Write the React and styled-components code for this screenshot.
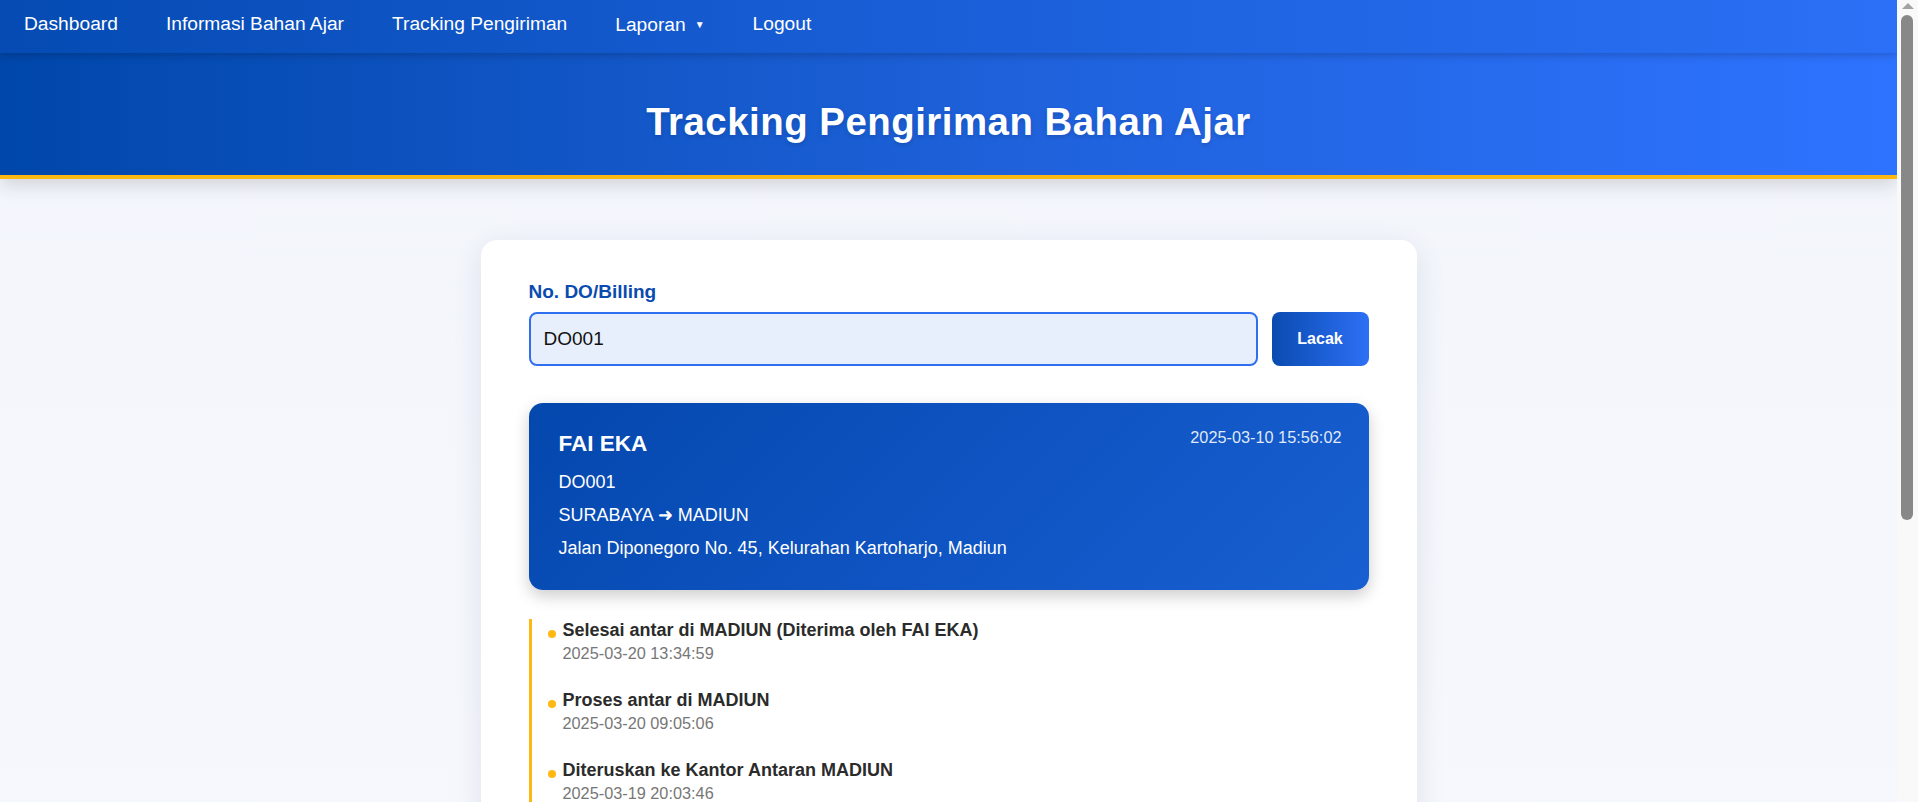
import React from 'react'
import styled, { createGlobalStyle } from 'styled-components';

const GlobalStyle = createGlobalStyle`
    * {
        box-sizing: border-box;
    }
    html::-webkit-scrollbar {
        display: none;
    }
    body {
        margin: 0;
        font-family: "Liberation Sans", Arial, sans-serif;
        background: linear-gradient(180deg, #f2f5fb 0%, #f8fafd 100%);
        min-height: 100vh;
    }
`;

// leaves room for the classic scrollbar drawn at the right edge
const Page = styled.div`
    padding-right: 21px;
`;

const ScrollTrack = styled.div`
    position: fixed;
    top: 0;
    right: 0;
    width: 21px;
    height: 100vh;
    background: #f9f9f9;
    z-index: 10;
`;

const ScrollArrow = styled.div`
    margin: 3px 0 0 2px;
    width: 0;
    height: 0;
    border-left: 6px solid transparent;
    border-right: 6px solid transparent;
    border-bottom: 6px solid #a3a3a3;
    transform: translateX(3px);
`;

const ScrollThumb = styled.div`
    margin: 6px 0 0 4px;
    width: 12px;
    height: 505px;
    border-radius: 6px;
    background: #888888;
`;

const Nav = styled.nav`
    height: 53px;
    display: flex;
    align-items: flex-start;
    padding-top: 13px;
    background: linear-gradient(90deg, #054bb3 0%, #1a5fd8 50%, #2b70f6 100%);
    box-shadow: 0 2px 8px rgba(0, 0, 0, 0.22);
    position: relative;
    z-index: 2;
`;

const NavLink = styled.a`
    color: #ffffff;
    font-size: 19.2px;
    line-height: 22px;
    padding: 0 24px;
    text-decoration: none;
    display: flex;
    align-items: center;
`;

const Caret = styled.span`
    font-size: 10px;
    margin-left: 9px;
    margin-top: 1px;
`;

const Header = styled.header`
    height: 126px;
    padding-top: 16px;
    display: flex;
    align-items: center;
    justify-content: center;
    background: linear-gradient(90deg, #0047ab 0%, #1f62dc 55%, #2e73ff 100%);
    border-bottom: 4px solid #fdb813;
    box-shadow: 0 6px 18px rgba(0, 0, 0, 0.14);
    position: relative;
    z-index: 1;
`;

const Title = styled.h1`
    margin: 0;
    color: #ffffff;
    font-size: 38.4px;
    font-weight: 700;
    letter-spacing: 0.5px;
    text-shadow: 0 2px 4px rgba(0, 0, 0, 0.15);
`;

const Container = styled.main`
    max-width: 960px;
    margin: 0 auto;
    padding: 61px 12px 60px;
`;

const Card = styled.section`
    background: #ffffff;
    border-radius: 16px;
    padding: 41px 48px 48px;
    box-shadow: 0 8px 30px rgba(20, 40, 90, 0.1);
`;

const Label = styled.label`
    display: block;
    color: #0a4bb0;
    font-size: 19px;
    font-weight: 700;
    line-height: 22px;
    margin-bottom: 9px;
`;

const SearchRow = styled.div`
    display: flex;
    gap: 14px;
`;

const Input = styled.input`
    flex: 1;
    height: 54px;
    border: 2px solid #2f6ff0;
    border-radius: 8px;
    background: #e8effc;
    padding: 0 13px;
    font-family: "Liberation Sans", Arial, sans-serif;
    font-size: 19px;
    color: #111111;
    outline: none;
`;

const Button = styled.button`
    width: 97px;
    height: 54px;
    border: none;
    border-radius: 8px;
    background: linear-gradient(90deg, #0a4bb0 0%, #2d70f5 100%);
    color: #ffffff;
    font-family: "Liberation Sans", Arial, sans-serif;
    font-size: 16px;
    font-weight: 700;
    cursor: pointer;
`;

const Result = styled.div`
    margin-top: 37px;
    border-radius: 14px;
    padding: 24px 27px 29px 30px;
    background: linear-gradient(135deg, #0447ad 0%, #0d52bf 45%, #185fd1 100%);
    color: #ffffff;
    box-shadow: 0 6px 16px rgba(0, 0, 0, 0.2);
`;

const ResultHead = styled.div`
    display: flex;
    justify-content: space-between;
    align-items: flex-start;
    margin-bottom: 12px;
`;

const Name = styled.h2`
    margin: 4px 0 0;
    font-size: 22.5px;
    line-height: 26px;
    font-weight: 700;
`;

const Stamp = styled.span`
    font-size: 16.3px;
    line-height: 20px;
    color: rgba(255, 255, 255, 0.88);
`;

const Line = styled.p`
    margin: 0 0 7px;
    font-size: 18px;
    line-height: 26px;
    &:last-child {
        margin-bottom: 0;
    }
`;

const Timeline = styled.ul`
    list-style: none;
    margin: 29px 0 0;
    padding: 0 0 0 16px;
    border-left: 3px solid #fdb813;
`;

const Item = styled.li`
    display: grid;
    grid-template-columns: 8px 1fr;
    column-gap: 7px;
    margin-bottom: 25px;
`;

const Dot = styled.span`
    width: 8px;
    height: 8px;
    border-radius: 50%;
    background: #fdb813;
    margin-top: 11px;
`;

const Status = styled.div`
    color: #2b2b2b;
    font-size: 18px;
    font-weight: 700;
    line-height: 22px;
`;

const When = styled.div`
    color: #777777;
    font-size: 16.3px;
    line-height: 22px;
    margin-top: 1px;
`;

const history = [
  { status: 'Selesai antar di MADIUN (Diterima oleh FAI EKA)', time: '2025-03-20 13:34:59' },
  { status: 'Proses antar di MADIUN', time: '2025-03-20 09:05:06' },
  { status: 'Diteruskan ke Kantor Antaran MADIUN', time: '2025-03-19 20:03:46' },
  { status: 'Tiba di Hub MADIUN', time: '2025-03-19 15:21:10' },
  { status: 'Diteruskan ke Hub MADIUN', time: '2025-03-18 22:47:33' },
  { status: 'Tiba di Hub SURABAYA', time: '2025-03-18 10:12:05' },
  { status: 'Proses sortir di SURABAYA', time: '2025-03-17 19:40:28' },
  { status: 'Diterima di Kantor SURABAYA', time: '2025-03-17 08:15:44' },
  { status: 'Penjemputan bahan ajar di SURABAYA', time: '2025-03-11 10:02:17' },
  { status: 'Pesanan dibuat', time: '2025-03-10 15:56:02' },
];

const App = () => {
  return (
    <Page>
      <GlobalStyle />
      <ScrollTrack>
        <ScrollArrow />
        <ScrollThumb />
      </ScrollTrack>
      <Nav>
        <NavLink href="#">Dashboard</NavLink>
        <NavLink href="#">Informasi Bahan Ajar</NavLink>
        <NavLink href="#">Tracking Pengiriman</NavLink>
        <NavLink href="#">Laporan<Caret>▼</Caret></NavLink>
        <NavLink href="#">Logout</NavLink>
      </Nav>
      <Header>
        <Title>Tracking Pengiriman Bahan Ajar</Title>
      </Header>
      <Container>
        <Card>
          <Label htmlFor="do">No. DO/Billing</Label>
          <SearchRow>
            <Input id="do" defaultValue="DO001" />
            <Button>Lacak</Button>
          </SearchRow>
          <Result>
            <ResultHead>
              <Name>FAI EKA</Name>
              <Stamp>2025-03-10 15:56:02</Stamp>
            </ResultHead>
            <Line>DO001</Line>
            <Line>SURABAYA ➜ MADIUN</Line>
            <Line>Jalan Diponegoro No. 45, Kelurahan Kartoharjo, Madiun</Line>
          </Result>
          <Timeline>
            {history.map((h) => (
              <Item key={h.time}>
                <Dot />
                <div>
                  <Status>{h.status}</Status>
                  <When>{h.time}</When>
                </div>
              </Item>
            ))}
          </Timeline>
        </Card>
      </Container>
    </Page>
  )
}

export default App
